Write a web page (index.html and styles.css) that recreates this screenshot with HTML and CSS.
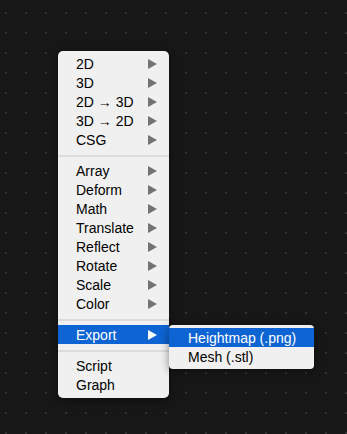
FILE: index.html
```html
<!DOCTYPE html>
<html lang="en">
<head>
    <meta charset="UTF-8">
    <meta name="viewport" content="width=device-width, initial-scale=1.0">
    <title>Context menu</title>
    <link rel="stylesheet" href="styles.css">
</head>
<body>
    <div class="canvas">
        <ul class="menu">
            <li class="item">2D<span class="arrow"></span></li>
            <li class="item">3D<span class="arrow"></span></li>
            <li class="item">2D → 3D<span class="arrow"></span></li>
            <li class="item">3D → 2D<span class="arrow"></span></li>
            <li class="item">CSG<span class="arrow"></span></li>
            <li class="sep"></li>
            <li class="item">Array<span class="arrow"></span></li>
            <li class="item">Deform<span class="arrow"></span></li>
            <li class="item">Math<span class="arrow"></span></li>
            <li class="item">Translate<span class="arrow"></span></li>
            <li class="item">Reflect<span class="arrow"></span></li>
            <li class="item">Rotate<span class="arrow"></span></li>
            <li class="item">Scale<span class="arrow"></span></li>
            <li class="item">Color<span class="arrow"></span></li>
            <li class="sep"></li>
            <li class="item active">Export<span class="arrow"></span>
                <ul class="menu submenu">
                    <li class="item active">Heightmap (.png)</li>
                    <li class="item">Mesh (.stl)</li>
                </ul>
            </li>
            <li class="sep"></li>
            <li class="item">Script</li>
            <li class="item">Graph</li>
        </ul>
    </div>
</body>
</html>
```

FILE: styles.css
```css
/* dark canvas with dot grid */
body {
    margin: 0;
    height: 100vh;
    background-color: #171717;
    background-image: radial-gradient(circle, #3c3c3c 0.6px, transparent 1px);
    background-size: 20px 20px;
    background-position: -4px 3px;
    font-family: "Liberation Sans", Arial, sans-serif;
    font-size: 14px;
    color: #000000;
}

.canvas {
    padding: 51px 0 0 58px;
}

/* menu panel */
.menu {
    list-style: none;
    margin: 0;
    width: 111px;
    padding: 3px 0 4px;
    background: #f0f0f0;
    border-radius: 5px;
    box-shadow: 0 2px 8px rgba(0, 0, 0, 0.45);
}

.item {
    position: relative;
    display: flex;
    align-items: center;
    justify-content: space-between;
    height: 19px;
    padding: 0 12px 0 18px;
    white-space: nowrap;
}

.item.active {
    background: #0e64d2;
    color: #ffffff;
}

/* submenu triangle */
.arrow {
    width: 0;
    height: 0;
    border-top: 5px solid transparent;
    border-bottom: 5px solid transparent;
    border-left: 9px solid #737373;
}

.active .arrow {
    border-left-color: #ffffff;
}

.sep {
    height: 2px;
    margin: 6px 0 4px;
    background: #dcdcdc;
}

/* nested menu */
.submenu {
    position: absolute;
    top: 0;
    left: 111px;
    width: 145px;
    padding: 3px 0;
    color: #000000;
    border-radius: 4px;
}

.submenu .item {
    padding-left: 19px;
}
```
